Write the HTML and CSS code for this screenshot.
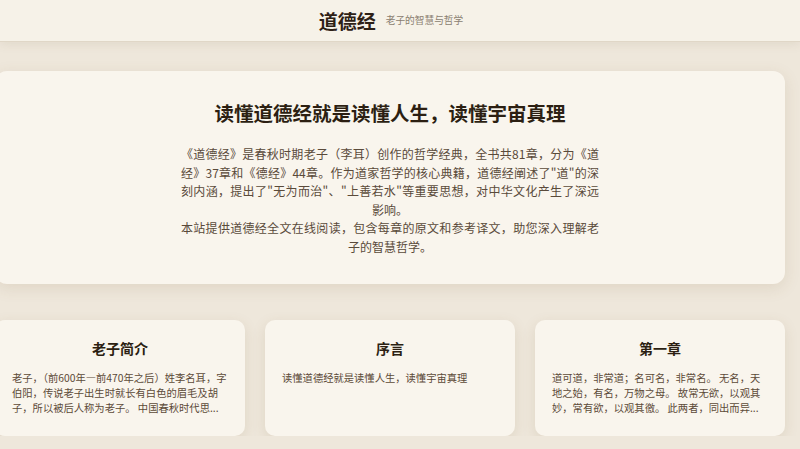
FILE: index.html
```html
<!DOCTYPE html>
<html lang="zh-CN">
<head>
<meta charset="utf-8">
<title>道德经 - 老子的智慧与哲学</title>
<link rel="stylesheet" href="styles.css">
</head>
<body>
<header class="site-header">
  <div class="brand">
    <h1 class="brand-title">道德经</h1>
    <span class="brand-sub">老子的智慧与哲学</span>
  </div>
</header>
<main class="container">
  <section class="hero">
    <h2 class="hero-title">读懂道德经就是读懂人生，读懂宇宙真理</h2>
    <div class="hero-text">
      <p>《道德经》是春秋时期老子（李耳）创作的哲学经典，全书共81章，分为《道经》37章和《德经》44章。作为道家哲学的核心典籍，道德经阐述了"道"的深刻内涵，提出了"无为而治"、"上善若水"等重要思想，对中华文化产生了深远影响。</p>
      <p>本站提供道德经全文在线阅读，包含每章的原文和参考译文，助您深入理解老子的智慧哲学。</p>
    </div>
  </section>
  <section class="cards">
    <article class="card">
      <h3 class="card-title">老子简介</h3>
      <p class="card-text">老子，（前600年—前470年之后）姓李名耳，字伯阳，传说老子出生时就长有白色的眉毛及胡子，所以被后人称为老子。 中国春秋时代思...</p>
    </article>
    <article class="card">
      <h3 class="card-title">序言</h3>
      <p class="card-text">读懂道德经就是读懂人生，读懂宇宙真理</p>
    </article>
    <article class="card">
      <h3 class="card-title">第一章</h3>
      <p class="card-text">道可道，非常道；名可名，非常名。 无名，天地之始，有名，万物之母。 故常无欲，以观其妙，常有欲，以观其徼。 此两者，同出而异...</p>
    </article>
  </section>
</main>
</body>
</html>
```

FILE: styles.css
```css
* { box-sizing: border-box; }

html, body {
  margin: 0;
  padding: 0;
}

body {
  background: #eee7db;
  font-family: "Noto Sans CJK SC", "Noto Sans", sans-serif;
  color: #3a2b1c;
  overflow: hidden;
}

.site-header {
  height: 42px;
  background: #f6f2e8;
  border-bottom: 1px solid #e0d7c7;
  box-shadow: 0 2px 10px rgba(110, 85, 50, 0.10);
  display: flex;
  justify-content: center;
  align-items: center;
  padding-right: 18px;
}

.brand {
  display: flex;
  align-items: center;
  gap: 10px;
}

.brand-title {
  margin: 0;
  font-size: 19px;
  line-height: 26px;
  font-weight: 700;
  color: #2e2116;
}

.brand-sub {
  font-size: 9.7px;
  color: #8a7e70;
  margin-top: -1px;
}

.container {
  width: 790px;
  margin-left: -5px;
  padding-top: 29px;
}

.hero {
  background: #f9f5ed;
  border-radius: 12px;
  box-shadow: 0 4px 16px rgba(120, 90, 50, 0.13);
  padding: 29px 40px 27px;
  text-align: center;
}

.hero-title {
  margin: 0;
  font-size: 19.5px;
  line-height: 26px;
  font-weight: 700;
  color: #2c1f12;
}

.hero-text {
  max-width: 418px;
  margin: 19px auto 0;
  font-size: 12px;
  line-height: 18.6px;
  color: #5a4a3a;
  text-align: justify;
  text-align-last: center;
}

.hero-text p {
  margin: 0;
}

.cards {
  margin-top: 36px;
  display: grid;
  grid-template-columns: repeat(3, 1fr);
  gap: 20px;
}

.card {
  background: #f9f5ed;
  border-radius: 10px;
  box-shadow: 0 4px 14px rgba(120, 90, 50, 0.13);
  padding: 19px 17px 19px;
  height: 116px;
}

.card-title {
  margin: 0;
  text-align: center;
  font-size: 14px;
  line-height: 19px;
  font-weight: 700;
  color: #2c1f12;
}

.card-text {
  margin: 12px 0 0;
  font-size: 10.3px;
  line-height: 15px;
  color: #5c4a38;
}
```
